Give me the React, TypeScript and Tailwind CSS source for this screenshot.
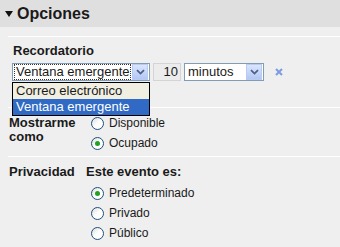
import type { ReactNode } from "react";

function Chevron() {
  return (
    <span className="flex h-[16px] w-[16px] items-center justify-center border border-[#b9cbf3] bg-gradient-to-b from-[#dbe6fd] to-[#b3c7f5]">
      <svg width="9" height="6" viewBox="0 0 9 6">
        <path d="M1 1.2 L4.5 4.6 L8 1.2" fill="none" stroke="#4d6185" strokeWidth="1.8" />
      </svg>
    </span>
  );
}

function Radio({ checked, children }: { checked?: boolean; children: ReactNode }) {
  return (
    <label className="flex h-[20px] items-center gap-[5px] text-[12px] text-[#1a1a1a]">
      <span className="flex h-[13px] w-[13px] items-center justify-center rounded-full border border-[#1c5180] bg-gradient-to-br from-[#dcdcd6] via-white to-white">
        {checked && <span className="h-[5px] w-[5px] rounded-full bg-[#21a121]" />}
      </span>
      {children}
    </label>
  );
}

export default function App() {
  return (
    <div className="h-[247px] w-[340px] overflow-hidden bg-[#efefef] font-['Liberation_Sans',Arial,sans-serif] text-[#1a1a1a]">
      <header className="flex h-[27px] items-center gap-[4px] bg-[#dfdfdf] pl-[5px]">
        <svg width="8" height="6" viewBox="0 0 8 6">
          <path d="M0 0 H8 L4 6 Z" fill="#111" />
        </svg>
        <span className="text-[16px] font-bold">Opciones</span>
      </header>

      <div className="pl-[8px]">
        <div className="mt-[9px] h-px bg-white" />

        <div className="pl-[5px] pt-[6px] text-[13px] font-bold leading-[15px]">Recordatorio</div>

        <div className="relative mt-[5px] flex items-center pl-[4px]">
          <div className="flex h-[18px] w-[138px] items-center justify-between border border-[#7f9db9] bg-white pl-[1px] pr-[1px]">
            <span className="border border-dotted border-[#333] px-[1px] text-[13px] leading-[14px]">Ventana emergente</span>
            <Chevron />
          </div>
          <div className="ml-[3px] flex h-[18px] w-[28px] items-center justify-end border border-[#d4d4d4] bg-[#ececec] pr-[2px] text-[13px]">
            10
          </div>
          <div className="ml-[3px] flex h-[18px] w-[80px] items-center justify-between border border-[#7f9db9] bg-white pl-[3px] pr-[1px] text-[13px]">
            minutos
            <Chevron />
          </div>
          <svg className="ml-[11px]" width="8" height="8" viewBox="0 0 8 8">
            <path d="M1 1 L7 7 M7 1 L1 7" stroke="#7d9be0" strokeWidth="2" />
          </svg>

          <div className="absolute left-[4px] top-[19px] w-[138px] border border-black bg-white text-[13px] leading-[16px]">
            <div className="bg-[#f1efe2] pl-[3px]">Correo electrónico</div>
            <div className="bg-[#316ac5] pl-[3px] text-white">Ventana emergente</div>
          </div>
        </div>

        <div className="mt-[26px] h-px bg-white" />

        <div className="flex pt-[5px]">
          <div className="w-[78px] pl-[1px] pt-[3px] text-[13px] font-bold leading-[14px]">
            Mostrarme
            <br />
            como
          </div>
          <div className="pl-[5px]">
            <Radio>Disponible</Radio>
            <Radio checked>Ocupado</Radio>
          </div>
        </div>

        <div className="mt-[3px] h-px bg-white" />

        <div className="flex pt-[7px]">
          <div className="w-[78px] pl-[1px] text-[13px] font-bold leading-[15px]">Privacidad</div>
          <div>
            <div className="text-[13px] font-bold leading-[15px]">Este evento es:</div>
            <div className="pl-[5px] pt-[4px]">
              <Radio checked>Predeterminado</Radio>
              <Radio>Privado</Radio>
              <Radio>Público</Radio>
            </div>
          </div>
        </div>
      </div>
    </div>
  );
}
